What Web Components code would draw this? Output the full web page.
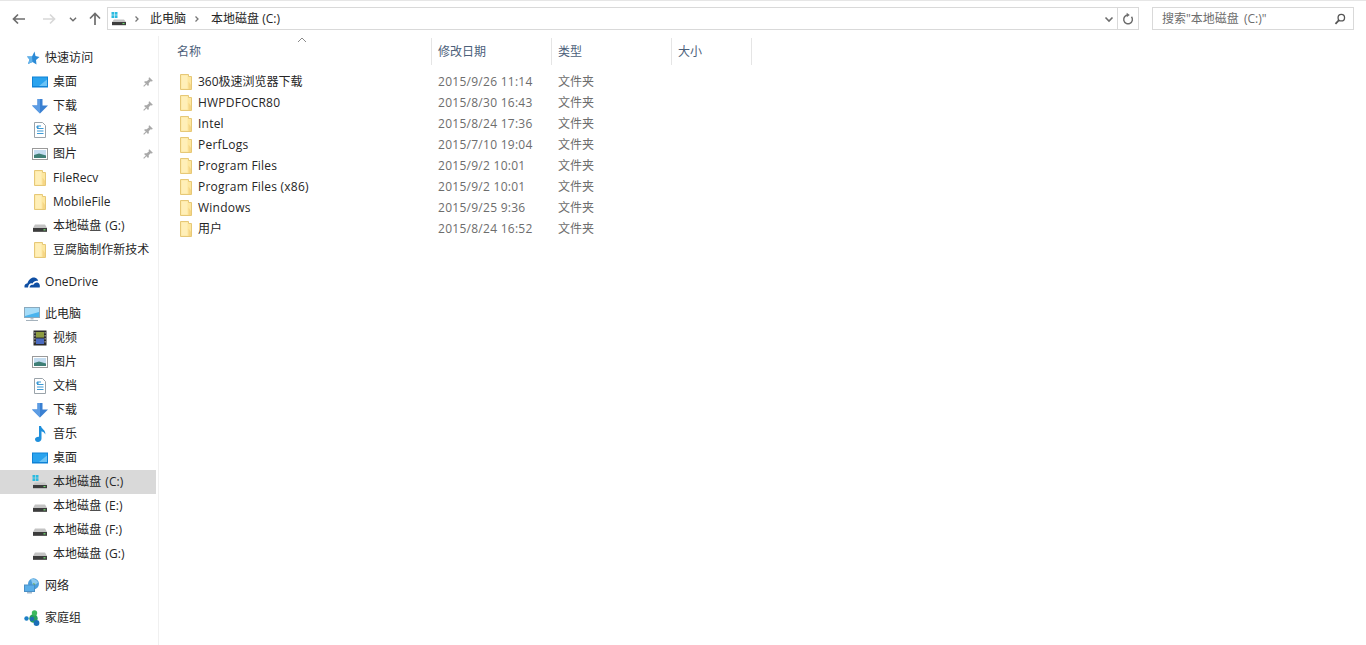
<!DOCTYPE html>
<html lang="zh-CN">
<head>
<meta charset="utf-8">
<title>本地磁盘 (C:)</title>
<style>
  html, body { margin: 0; height: 100%; background: #fff; overflow: hidden; }
  body { font: 12px "Open Sans", "Noto Sans CJK SC", sans-serif; color: #262626; }
</style>
</head>
<body>
<file-explorer>
  <nav-toolbar slot="top" path="此电脑,本地磁盘 (C:)" search='搜索"本地磁盘 (C:)"'></nav-toolbar>
  <side-nav slot="side">
    <nav-item top icon="star">快速访问</nav-item>
    <nav-item icon="desktop" pinned>桌面</nav-item>
    <nav-item icon="download" pinned>下载</nav-item>
    <nav-item icon="doc" pinned>文档</nav-item>
    <nav-item icon="picture" pinned>图片</nav-item>
    <nav-item icon="folder">FileRecv</nav-item>
    <nav-item icon="folder">MobileFile</nav-item>
    <nav-item icon="drive">本地磁盘 (G:)</nav-item>
    <nav-item icon="folder">豆腐脑制作新技术</nav-item>
    <nav-item top gap icon="onedrive">OneDrive</nav-item>
    <nav-item top gap icon="pc">此电脑</nav-item>
    <nav-item icon="video">视频</nav-item>
    <nav-item icon="picture">图片</nav-item>
    <nav-item icon="doc">文档</nav-item>
    <nav-item icon="download">下载</nav-item>
    <nav-item icon="music">音乐</nav-item>
    <nav-item icon="desktop">桌面</nav-item>
    <nav-item icon="sysdrive" selected>本地磁盘 (C:)</nav-item>
    <nav-item icon="drive">本地磁盘 (E:)</nav-item>
    <nav-item icon="drive">本地磁盘 (F:)</nav-item>
    <nav-item icon="drive">本地磁盘 (G:)</nav-item>
    <nav-item top gap icon="network">网络</nav-item>
    <nav-item top gap icon="homegroup">家庭组</nav-item>
  </side-nav>
  <file-list slot="main">
    <file-row name="360极速浏览器下载" date="2015/9/26 11:14" type="文件夹"></file-row>
    <file-row name="HWPDFOCR80" date="2015/8/30 16:43" type="文件夹"></file-row>
    <file-row name="Intel" date="2015/8/24 17:36" type="文件夹"></file-row>
    <file-row name="PerfLogs" date="2015/7/10 19:04" type="文件夹"></file-row>
    <file-row name="Program Files" date="2015/9/2 10:01" type="文件夹"></file-row>
    <file-row name="Program Files (x86)" date="2015/9/2 10:01" type="文件夹"></file-row>
    <file-row name="Windows" date="2015/9/25 9:36" type="文件夹"></file-row>
    <file-row name="用户" date="2015/8/24 16:52" type="文件夹"></file-row>
  </file-list>
</file-explorer>

<script>
// icon shapes, all on a 16x16 box
const ICONS = {
  back: '<path d="M14 8H2.500M7 3.500 2.500 8 7 12.500" fill="none" stroke="#6d6d6d" stroke-width="1.700"/>',
  forward: '<path d="M2 8H13.500M9 3.500 13.500 8 9 12.500" fill="none" stroke="#d8d8d8" stroke-width="1.700"/>',
  up: '<path d="M8 14V2.500M3 7.500 8 2.500 13 7.500" fill="none" stroke="#6d6d6d" stroke-width="1.700"/>',
  chevdown: '<path d="M4.500 6.500 8 10l3.500-3.500" fill="none" stroke="#6d6d6d" stroke-width="1.600"/>',
  crumb: '<path d="M6.500 5.500 9 8l-2.500 2.500" fill="none" stroke="#777" stroke-width="1.300"/>',
  refresh: '<path d="M12 5.400A5 5 0 1 1 8 3.500" fill="none" stroke="#6d6d6d" stroke-width="1.700"/><path d="M6.500 .8 10 3.500 6.500 6z" fill="#6d6d6d"/>',
  search: '<circle cx="9.500" cy="6.500" r="3.700" fill="none" stroke="#555" stroke-width="1.500"/><path d="M6.800 9.300 2.800 13.500" stroke="#555" stroke-width="2"/>',
  pin: '<path d="M9.500 2.500 13.500 6.500 12.500 7.300 11 7 8.800 9.500 9 11.500 8 12.500 3.500 8 4.500 7 6.500 7.200 9 5 8.700 3.500z" fill="#a9a9a9"/><path d="M5.700 10.300 3 13" stroke="#a9a9a9" stroke-width="1.200"/>',
  star: '<path d="M10.500 1.500 11.500 6 15.500 7 12 10 12.500 14.500 8.500 12 4 14 5.500 9.500 3 6.500 8 6.500z" fill="#2b8ad6"/><path d="M3 6.500 8 6.500 8.500 12 4 14 5.500 9.500z" fill="#62b2ea"/>',
  desktop: '<rect x="0" y="2.500" width="16" height="11" fill="#0f82d6"/><rect x="1" y="3.500" width="14" height="8.500" fill="#2aa3ee"/><path d="M7 12 15 5.500V12z" fill="#6cc3f5"/>',
  download: '<path d="M5.500 1h5v6.500H16L8 15.500 0 7.500h5.500z" fill="#3a80d2"/><path d="M5.500 1h2.500v14.500L0 7.500h5.500z" fill="#5c9ce4"/>',
  doc: '<path d="M2.500 .5h8l3 3v12h-11z" fill="#fff" stroke="#9aa3aa"/><path d="M5 4h4M5 6.500h6.500M5 9h6.500M5 11.500h6.500" stroke="#3d9ad6" stroke-width="1.100"/><path d="M4.500 4h2v2h-2z" fill="#3d9ad6"/>',
  picture: '<rect x=".5" y="2.500" width="15" height="11" fill="#fff" stroke="#9a9a9a"/><rect x="2" y="4" width="12" height="8" fill="#c4dcf0"/><path d="M2 9 7 7.500 14 9.500V12H2z" fill="#3f7f76"/>',
  folder: '<path d="M2.500 .5h8v2h3v13h-11z" fill="#fde7a0" stroke="#e6c877"/><path d="M10.500 2.500v5l2.500 3.500v4h-2.500z" fill="#f6d685"/><path d="M3.500 1.500h6v13h-6z" fill="#ffefb8"/>',
  drive: '<path d="M3 6.500h10L15 10v3.500H1V10z" fill="#c3c3c3"/><rect x="1" y="10" width="14" height="3.800" fill="#3c3c3c"/><rect x="11.500" y="11.200" width="2" height="1.200" fill="#70e070"/>',
  sysdrive: '<path d="M.5 1h2.700v2.700H.5zM3.800 1h2.700v2.700H3.800zM.5 4.300h2.700V7H.5zM3.800 4.300h2.700V7H3.800z" fill="#2bbbe0"/><path d="M3 8.500h10L15 11v3H1V11z" fill="#c3c3c3"/><rect x="1" y="11" width="14" height="3.200" fill="#3c3c3c"/><rect x="11.500" y="12" width="2" height="1.100" fill="#70e070"/>',
  onedrive: '<path d="M.5 13.500c-.5-2.500 1-4 3-4.300C4.500 5.800 7.500 3 10.500 3.500c2 .3 3.300 1.700 3.700 3.500-2.500-.5-4.500.5-5.700 2.500-2-.8-4 .5-4.500 4z" fill="#0f4fa3"/><path d="M5.500 13.500c.5-2.500 2-3.300 3.700-2.500 1-2.200 3-3 4.800-2.300 1.500.5 2.200 2.500 1.700 4.800z" fill="#0f4fa3"/>',
  pc: '<rect x=".5" y="1.500" width="15" height="10" fill="#4ab4ee" stroke="#8aa9bd"/><path d="M1 2h14v4L1 10z" fill="#a6dcf8"/><path d="M6.500 12h3v1.500h-3z" fill="#b7c2cb"/><path d="M2 14h12v1H2z" fill="#a5b2bc"/>',
  video: '<rect x="1.500" y=".5" width="13" height="15" fill="#2b2b2b"/><rect x="4" y="2" width="8" height="5.500" fill="#8d9b40"/><rect x="4" y="8.500" width="8" height="5.500" fill="#4b6bc0"/><path d="M2.500 2h.8v1.500h-.8zM2.500 5h.8v1.500h-.8zM2.500 8h.8v1.500h-.8zM2.500 11h.8v1.500h-.8zM12.700 2h.8v1.500h-.8zM12.700 5h.8v1.500h-.8zM12.700 8h.8v1.500h-.8zM12.700 11h.8v1.500h-.8z" fill="#ddd"/>',
  music: '<path d="M7 0h2c.3 3 5 4 4.300 8.500C12.500 6.500 11 5.700 9.500 5.300V12.500c0 2-1.700 3.500-3.500 3.500S3 14.800 3 13.300 5 10.500 7 10.800z" fill="#1e8fdc"/>',
  network: '<circle cx="9.500" cy="5.800" r="5.500" fill="#4c9fdc"/><path d="M7 1.200c3-1 6.500 1 7 3.500L9 8z" fill="#8fcbef"/><path d="M9 5l2.500 1-1.500 2.500z" fill="#6fae53"/><rect x=".5" y="7" width="10" height="6.500" fill="#5aaee8" stroke="#4a8fc6"/><path d="M3 14.800h5" stroke="#9bb2c4" stroke-width="1.300"/>',
  homegroup: '<circle cx="2.500" cy="8.500" r="2.200" fill="#1c7fc6"/><circle cx="9.500" cy="8.500" r="4.200" fill="#27a05c"/><circle cx="10.500" cy="3" r="2.700" fill="#3dba5c"/><circle cx="12.500" cy="13" r="2.900" fill="#1b6fb8"/><circle cx="8" cy="9" r="2.200" fill="#1f6fb0"/>'
};

class WinIcon extends HTMLElement {
  connectedCallback() {
    const size = this.getAttribute('size') || 16;
    const shape = ICONS[this.getAttribute('name')] || '';
    this.attachShadow({ mode: 'open' }).innerHTML = `
      <style>
        :host { display: block; flex: none; width: ${size}px; height: ${size}px; }
        svg { display: block; width: 100%; height: 100%; }
      </style>
      <svg viewBox="0 0 16 16" aria-hidden="true">${shape}</svg>`;
  }
}

class FileExplorer extends HTMLElement {
  constructor() {
    super();
    this.attachShadow({ mode: 'open' }).innerHTML = `
      <style>
        :host { display: flex; flex-direction: column; height: 100vh; border-top: 1px solid #e6e6e6; box-sizing: border-box; }
        .body { display: flex; flex: 1; min-height: 0; }
      </style>
      <slot name="top"></slot>
      <div class="body">
        <slot name="side"></slot>
        <slot name="main"></slot>
      </div>`;
  }
}

class NavToolbar extends HTMLElement {
  connectedCallback() {
    const crumbs = this.getAttribute('path').split(',').map((part, i) => `
      <win-icon name="crumb" class="crumb ${i ? '' : 'first'}"></win-icon><span class="part">${part}</span>`).join('');
    this.attachShadow({ mode: 'open' }).innerHTML = `
      <style>
        :host { display: flex; align-items: center; height: 35px; padding: 0 12px 0 11px; box-sizing: border-box; flex: none; }
        .navs { display: flex; align-items: center; width: 96px; flex: none; }
        .navs win-icon:nth-child(1) { margin-right: 14px; }
        .navs win-icon:nth-child(2) { margin-right: 9px; }
        .navs win-icon:nth-child(3) { margin-right: 7px; }
        .box { display: flex; align-items: center; height: 23px; box-sizing: border-box; border: 1px solid #d9d9d9; background: #fff; }
        .address { flex: 1; min-width: 0; padding-left: 3px; }
        .crumb { margin-right: 6px; }
        .crumb.first { margin: 0 5px 0 2px; }
        .part { margin-right: 3px; padding-bottom: 2px; white-space: nowrap; }
        .fill { flex: 1; }
        .refresh { width: 20px; height: 21px; display: flex; align-items: center; justify-content: center; border-left: 1px solid #d9d9d9; }
        .search { width: 202px; flex: none; margin-left: 13px; padding: 0 6px 0 9px; justify-content: space-between; color: #6d6d6d; word-spacing: 2px; }
        .search span { padding-bottom: 1px; }
      </style>
      <div class="navs">
        <win-icon name="back"></win-icon>
        <win-icon name="forward"></win-icon>
        <win-icon name="chevdown" size="14"></win-icon>
        <win-icon name="up"></win-icon>
      </div>
      <div class="box address">
        <win-icon name="sysdrive"></win-icon>
        ${crumbs}
        <span class="fill"></span>
        <win-icon name="chevdown"></win-icon>
        <span class="refresh"><win-icon name="refresh" size="14"></win-icon></span>
      </div>
      <div class="box search">
        <span>${this.getAttribute('search')}</span>
        <win-icon name="search" size="14"></win-icon>
      </div>`;
  }
}

class SideNav extends HTMLElement {
  constructor() {
    super();
    this.attachShadow({ mode: 'open' }).innerHTML = `
      <style>
        :host { display: flex; flex-direction: column; flex: none; width: 159px; height: 100%; box-sizing: border-box; padding: 10px 2px 0 0; border-right: 1px solid #f0f0f0; }
      </style>
      <slot></slot>`;
  }
}

class NavItem extends HTMLElement {
  connectedCallback() {
    const pin = this.hasAttribute('pinned') ? '<win-icon class="pin" name="pin" size="14"></win-icon>' : '';
    this.attachShadow({ mode: 'open' }).innerHTML = `
      <style>
        :host { display: flex; align-items: center; height: 24px; flex: none; padding-left: 32px; padding-right: 1px; box-sizing: border-box; white-space: nowrap; word-spacing: 1px; }
        :host([top]) { padding-left: 24px; }
        :host([gap]) { margin-top: 8px; }
        :host([selected]) { background: #d9d9d9; }
        .label { margin-left: 5px; flex: 1; padding-bottom: 2px; letter-spacing: .05px; }
      </style>
      <win-icon name="${this.getAttribute('icon')}"></win-icon>
      <span class="label"><slot></slot></span>
      ${pin}`;
  }
}

class FileList extends HTMLElement {
  constructor() {
    super();
    this.attachShadow({ mode: 'open' }).innerHTML = `
      <style>
        :host { display: block; flex: 1; min-width: 0; padding-top: 2px; --cols: 272px 120px 120px 81px; }
        .head { display: grid; grid-template-columns: var(--cols); height: 27px; color: #4c607a; position: relative; }
        .head span { display: flex; align-items: center; padding: 0 0 2px 6px; border-left: 1px solid #e5e5e5; }
        .head span:nth-child(1) { padding-left: 18px; border-left: 0; }
        .head span:nth-child(4) { border-right: 1px solid #e5e5e5; }
        .sort { position: absolute; left: 138px; top: -1px; width: 10px; height: 6px; }
        .rows { padding-top: 6px; }
      </style>
      <div class="head">
        <span>名称</span><span>修改日期</span><span>类型</span><span>大小</span>
        <svg class="sort" viewBox="0 0 10 6"><path d="M1 5 5 1l4 4" fill="none" stroke="#8a8a8a"/></svg>
      </div>
      <div class="rows"><slot></slot></div>`;
  }
}

class FileRow extends HTMLElement {
  connectedCallback() {
    const name = this.getAttribute('name');
    // latin names run a bit wider and sit lower than the CJK ones in the original font
    const latin = /^[\x20-\x7e]+$/.test(name);
    this.attachShadow({ mode: 'open' }).innerHTML = `
      <style>
        :host { display: grid; grid-template-columns: var(--cols); align-items: center; height: 21px; white-space: nowrap; color: #6d6d6d; }
        .name { display: flex; align-items: center; gap: 4px; padding-left: 19px; color: #262626; }
        .name span { letter-spacing: ${latin ? '.22px' : '0'}; padding-bottom: ${latin ? '0' : '2px'}; }
        .cell { padding: 0 0 1px 7px; }
        .date { letter-spacing: .27px; }
      </style>
      <div class="name"><win-icon name="folder"></win-icon><span>${name}</span></div>
      <div class="cell date">${this.getAttribute('date')}</div>
      <div class="cell">${this.getAttribute('type')}</div>`;
  }
}

customElements.define('win-icon', WinIcon);
customElements.define('file-explorer', FileExplorer);
customElements.define('nav-toolbar', NavToolbar);
customElements.define('side-nav', SideNav);
customElements.define('nav-item', NavItem);
customElements.define('file-list', FileList);
customElements.define('file-row', FileRow);
</script>
</body>
</html>
